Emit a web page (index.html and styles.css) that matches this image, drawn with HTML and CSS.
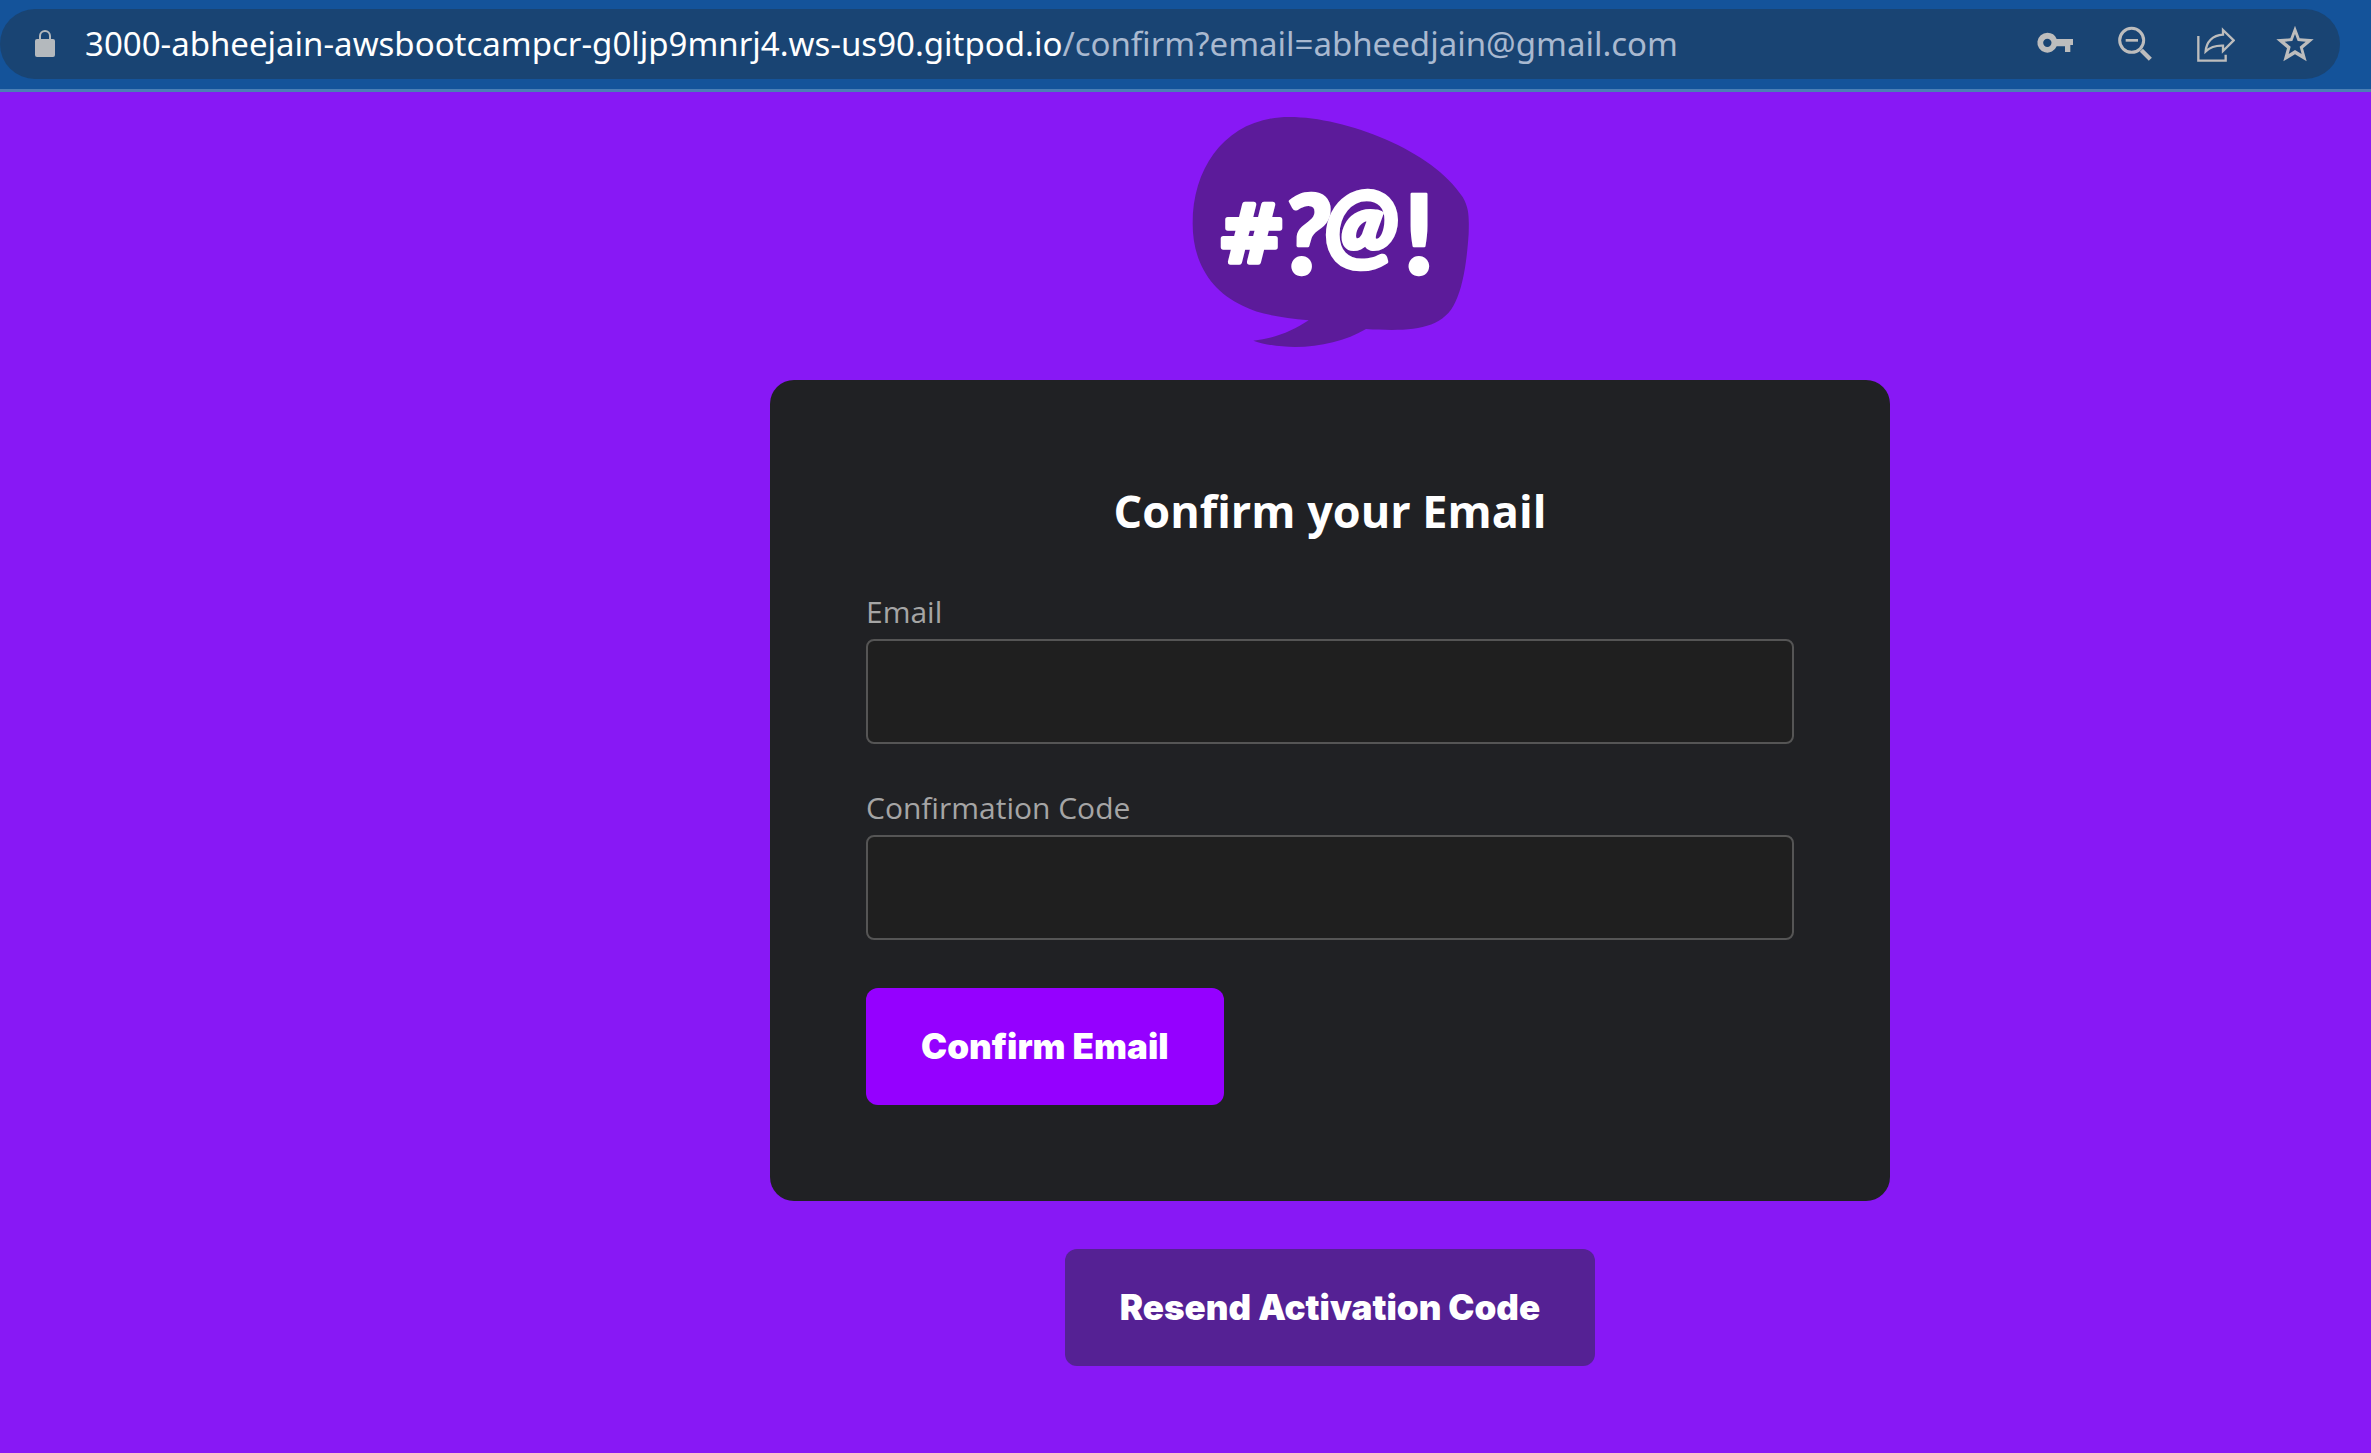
FILE: index.html
```html
<!DOCTYPE html>
<html lang="en">
<head>
<meta charset="utf-8">
<title>Confirm your Email</title>
<link rel="stylesheet" href="styles.css">
</head>
<body>
<header class="toolbar">
  <div class="omnibox">
    <svg class="lock" viewBox="0 0 20 28" aria-hidden="true"><path d="M5 11V6a5 5 0 0 1 10 0v5" fill="none" stroke="currentColor" stroke-width="2"/><rect x="0" y="9" width="20" height="18" rx="2" fill="currentColor"/></svg>
    <div class="url"><span class="host">3000-abheejain-awsbootcampcr-g0ljp9mnrj4.ws-us90.gitpod.io</span>/confirm?email=abheedjain@gmail.com</div>
    <div class="actions">
      <button class="icon" type="button" aria-label="Passwords"><svg viewBox="165 72 120 120"><path fill="currentColor" fill-rule="evenodd" d="M202 98a30 30 0 1 0 28 41h25v17h16v-21h8v-18h-49a30 30 0 0 0-28-19zm0 18a12 12 0 1 1 0 25a12 12 0 1 1 0-25z"/></svg></button>
      <button class="icon" type="button" aria-label="Zoom out"><svg viewBox="405 72 120 120" fill="none" stroke="currentColor"><circle cx="455" cy="121" r="36" stroke-width="9"/><path d="M437 121h37" stroke-width="8"/><path d="M484 151l27 27" stroke-width="13"/></svg></button>
      <button class="icon" type="button" aria-label="Share"><svg viewBox="645 72 120 120" fill="none" stroke="currentColor" stroke-width="7"><path d="M655 108v74h82v-18"/><path d="M729 90l32 31-32 32v-16c-25-1-38 4-52 17c2-28 20-48 52-50z"/></svg></button>
      <button class="icon" type="button" aria-label="Bookmark"><svg viewBox="885 72 120 120"><path fill="currentColor" fill-rule="evenodd" d="M945 77l14 38 42 3-32 27 11 39-35-21-35 21 11-39-32-27 42-3zm0 25l-8 21-23 2 18 15-6 22 19-12 20 12-6-22 18-15-24-2z"/></svg></button>
    </div>
  </div>
</header>
<main class="page">
  <svg class="logo" viewBox="32 50 840 693" role="img" aria-label="Logo">
    <path class="bubble" d="M330 50C500 50 760 150 850 290C870 325 869 350 868 400C862 490 850 560 828 605C790 690 690 694 560 686C470 740 330 757 222 721C285 715 340 692 388 660C300 651 240 642 190 616C90 570 40 480 40 370C40 190 150 50 330 50Z"/>
    <text class="marks"><tspan x="116" y="486" class="hash">#</tspan><tspan x="308" y="520" class="query">?</tspan><tspan x="436" y="470" class="at">@</tspan><tspan x="672" y="520" class="bang">!</tspan></text>
  </svg>
  <form class="card">
    <h1>Confirm your Email</h1>
    <div class="field"><label for="email">Email</label><input id="email" type="text"></div>
    <div class="field"><label for="code">Confirmation Code</label><input id="code" type="text"></div>
    <button class="btn primary" type="submit">Confirm Email</button>
  </form>
  <button class="btn resend" type="button">Resend Activation Code</button>
</main>
</body>
</html>
```

FILE: styles.css
```css
* { box-sizing: border-box; }

body {
  margin: 0;
  min-height: 100vh;
  background: #8818f5;
  font-family: "Open Sans", "Noto Sans", sans-serif;
}

.toolbar {
  padding: 9px 31px 10px 0;
  background: #14539a;
  border-bottom: 3px solid #4a7fb5;
}

.omnibox {
  display: flex;
  align-items: center;
  height: 70px;
  padding: 0 25px 0 35px;
  border-radius: 35px;
  background: #194473;
}

.lock { width: 20px; height: 28px; color: #b4b9bd; }

.url {
  flex: 1;
  margin-left: 30px;
  color: #a9b9d0;
  font-family: "Noto Sans", sans-serif;
  font-size: 33px;
  line-height: 46px;
  white-space: nowrap;
}

.host { color: #fff; }

.actions { display: flex; gap: 40px; }

.icon {
  width: 40px;
  height: 40px;
  padding: 0;
  border: 0;
  background: none;
  color: #bdbdbd;
}

.icon svg { display: block; width: 40px; height: 40px; }

.page {
  display: flex;
  flex-direction: column;
  align-items: center;
  padding: 25px 0 48px 289px;
}

.logo { width: 280px; height: 231px; margin-bottom: 32px; }

.bubble { fill: #5c1b9a; }

.marks {
  fill: #fff;
  stroke: #fff;
  stroke-width: 8px;
  stroke-linejoin: round;
  font-family: Lato, sans-serif;
  font-weight: 900;
}

.hash { font-family: "DejaVu Sans", sans-serif; font-size: 240px; stroke-width: 16px; }
.query { font-size: 330px; font-style: italic; }
.at { font-size: 285px; font-style: italic; stroke-width: 14px; }
.bang { font-size: 330px; }

.card {
  width: 100%;
  max-width: 1120px;
  padding: 96px;
  border-radius: 24px;
  background: #202124;
}

h1 {
  margin: 0 0 50px;
  color: #fff;
  font-size: 45px;
  font-weight: 700;
  line-height: 70px;
  text-align: center;
}

.field { margin-bottom: 48px; }

.field label {
  display: block;
  margin-bottom: 12px;
  color: #a5a5a5;
  font-size: 30px;
  line-height: 31px;
}

.field input {
  display: block;
  width: 100%;
  height: 105px;
  padding: 0 32px;
  border: 2px solid #555;
  border-radius: 8px;
  background: #1f1f1f;
  color: #fff;
  font: inherit;
  font-size: 30px;
}

.btn {
  display: block;
  padding: 36px 55px;
  border: 0;
  border-radius: 12px;
  color: #fff;
  font-family: Inter, sans-serif;
  font-size: 35px;
  font-weight: 900;
  line-height: 45px;
}

.primary { background: #9500ff; }

.resend { margin-top: 48px; background: #552194; }
```
